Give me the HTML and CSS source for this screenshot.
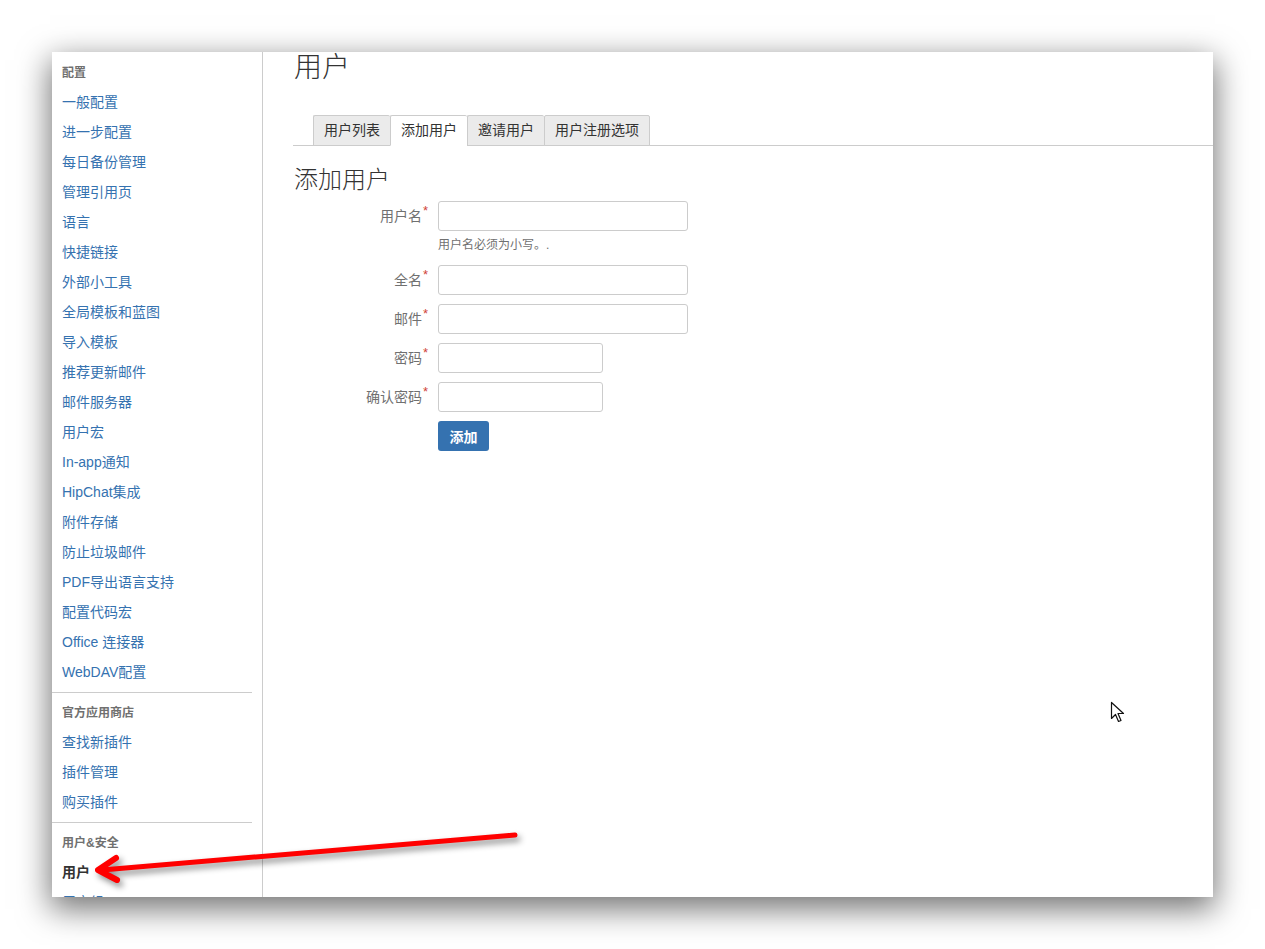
FILE: index.html
```html
<!DOCTYPE html>
<html lang="zh-CN">
<head>
<meta charset="utf-8">
<title>用户</title>
<link rel="stylesheet" href="styles.css">
</head>
<body>
<div class="stage">
  <div class="window">
    <nav class="sidebar">
      <div class="group">
        <div class="group-title">配置</div>
        <a class="nav-item">一般配置</a>
        <a class="nav-item">进一步配置</a>
        <a class="nav-item">每日备份管理</a>
        <a class="nav-item">管理引用页</a>
        <a class="nav-item">语言</a>
        <a class="nav-item">快捷链接</a>
        <a class="nav-item">外部小工具</a>
        <a class="nav-item">全局模板和蓝图</a>
        <a class="nav-item">导入模板</a>
        <a class="nav-item">推荐更新邮件</a>
        <a class="nav-item">邮件服务器</a>
        <a class="nav-item">用户宏</a>
        <a class="nav-item">In-app通知</a>
        <a class="nav-item">HipChat集成</a>
        <a class="nav-item">附件存储</a>
        <a class="nav-item">防止垃圾邮件</a>
        <a class="nav-item">PDF导出语言支持</a>
        <a class="nav-item">配置代码宏</a>
        <a class="nav-item">Office 连接器</a>
        <a class="nav-item">WebDAV配置</a>
      </div>
      <div class="group">
        <div class="group-title">官方应用商店</div>
        <a class="nav-item">查找新插件</a>
        <a class="nav-item">插件管理</a>
        <a class="nav-item">购买插件</a>
      </div>
      <div class="group">
        <div class="group-title">用户&amp;安全</div>
        <a class="nav-item current">用户</a>
        <a class="nav-item">用户组</a>
      </div>
    </nav>
    <main class="content">
      <h1 class="page-title">用户</h1>
      <ul class="tabs">
        <li class="tab">用户列表</li>
        <li class="tab active">添加用户</li>
        <li class="tab">邀请用户</li>
        <li class="tab last">用户注册选项</li>
      </ul>
      <h2 class="section-title">添加用户</h2>
      <form class="form">
        <div class="field">
          <label class="label">用户名<span class="req">*</span></label>
          <input class="input long" type="text">
        </div>
        <div class="help">用户名必须为小写。.</div>
        <div class="field">
          <label class="label">全名<span class="req">*</span></label>
          <input class="input long" type="text">
        </div>
        <div class="field">
          <label class="label">邮件<span class="req">*</span></label>
          <input class="input long" type="text">
        </div>
        <div class="field">
          <label class="label">密码<span class="req">*</span></label>
          <input class="input short" type="password">
        </div>
        <div class="field">
          <label class="label">确认密码<span class="req">*</span></label>
          <input class="input short" type="password">
        </div>
        <div class="actions">
          <button class="btn" type="button">添加</button>
        </div>
      </form>
    </main>
  </div>

  <svg class="arrow" width="480" height="60" viewBox="0 0 480 60">
    <path d="M465 5 L52 40" stroke="#ff0000" stroke-width="5" stroke-linecap="round" fill="none"/>
    <path d="M66 28 L48 40 L67 50" stroke="#ff0000" stroke-width="6" stroke-linecap="round" stroke-linejoin="round" fill="none"/>
  </svg>

  <svg class="cursor" width="16" height="24" viewBox="0 0 16 24">
    <path d="M1.5 1.5 L1.5 17.5 L5.5 13.5 L8.5 20.5 L11 19.5 L8 12.5 L13.5 12.5 Z" fill="#ffffff" stroke="#111111" stroke-width="1.2" stroke-linejoin="round"/>
  </svg>
</div>
</body>
</html>
```

FILE: styles.css
```css
html, body {
  margin: 0;
  padding: 0;
  background: #ffffff;
}

body {
  font-family: "Liberation Sans", Arial, "Noto Sans CJK SC", sans-serif;
  font-size: 14px;
  color: #333333;
}

.stage {
  position: relative;
  width: 1265px;
  height: 949px;
  padding: 52px 52px 0 52px;
  box-sizing: border-box;
  overflow: hidden;
}

.window {
  display: flex;
  width: 1161px;
  height: 845px;
  background: #ffffff;
  overflow: hidden;
  box-shadow: 0 10px 30px 2px rgba(0, 0, 0, 0.55);
}

/* Sidebar */
.sidebar {
  flex: 0 0 200px;
  padding: 7px 10px 0 0;
  border-right: 1px solid #cccccc;
}

.group {
  display: flex;
  flex-direction: column;
}

.group + .group {
  margin-top: 5px;
  border-top: 1px solid #cccccc;
  padding-top: 6px;
}

.group-title {
  padding-left: 10px;
  line-height: 28px;
  font-size: 12px;
  font-weight: bold;
  color: #707070;
}

.nav-item {
  display: block;
  padding-left: 10px;
  line-height: 30px;
  font-size: 14px;
  color: #3572b0;
  text-decoration: none;
  white-space: nowrap;
}

.nav-item.current {
  color: #333333;
  font-weight: bold;
}

/* Main content */
.content {
  flex: 1;
  padding: 0 0 0 30px;
}

.page-title {
  margin: 0;
  padding-left: 1px;
  font-size: 28px;
  line-height: 32px;
  font-weight: 300;
  color: #333333;
}

.tabs {
  display: flex;
  list-style: none;
  margin: 31px 0 0 0;
  padding: 0 0 0 20px;
  border-bottom: 1px solid #cccccc;
}

.tab {
  height: 29px;
  line-height: 29px;
  padding: 0 10px;
  background: #ebebeb;
  border-top: 1px solid #cccccc;
  border-left: 1px solid #cccccc;
  border-radius: 2px 2px 0 0;
  margin-bottom: -1px;
  border-bottom: 1px solid #cccccc;
  font-size: 14px;
  color: #333333;
  white-space: nowrap;
}

.tab.last {
  border-right: 1px solid #cccccc;
}

.tab.active {
  background: #ffffff;
  border-bottom-color: #ffffff;
}

.section-title {
  margin: 19px 0 0 0;
  padding-left: 1px;
  font-size: 24px;
  line-height: 30px;
  font-weight: 300;
  color: #333333;
}

/* Form */
.form {
  margin-top: 6px;
  padding-left: 1px;
}

.field {
  display: flex;
  align-items: center;
  margin-bottom: 9px;
}

.label {
  flex: 0 0 134px;
  text-align: right;
  padding-right: 10px;
  font-size: 14px;
  color: #707070;
  line-height: 20px;
}

.req {
  color: #d04437;
  font-size: 13px;
  position: relative;
  top: -6px;
  margin-left: 1px;
}

.input {
  height: 30px;
  box-sizing: border-box;
  border: 1px solid #cccccc;
  border-radius: 3px;
  background: #ffffff;
  padding: 0 6px;
  margin: 0;
  font: inherit;
}

.input.long {
  width: 250px;
}

.input.short {
  width: 165px;
}

.help {
  margin: -3px 0 12px 144px;
  font-size: 12px;
  line-height: 16px;
  color: #707070;
}

.actions {
  padding-left: 144px;
}

.btn {
  display: block;
  width: 51px;
  height: 30px;
  padding: 0;
  border: 0;
  border-radius: 3px;
  background: #3572b0;
  color: #ffffff;
  font-family: "Liberation Sans", Arial, "Noto Sans CJK SC", sans-serif;
  font-size: 14px;
  font-weight: bold;
}

/* Overlays */
.arrow {
  position: absolute;
  left: 50px;
  top: 830px;
  filter: drop-shadow(3px 4px 3px rgba(0, 0, 0, 0.45));
}

.cursor {
  position: absolute;
  left: 1110px;
  top: 701px;
}
```
